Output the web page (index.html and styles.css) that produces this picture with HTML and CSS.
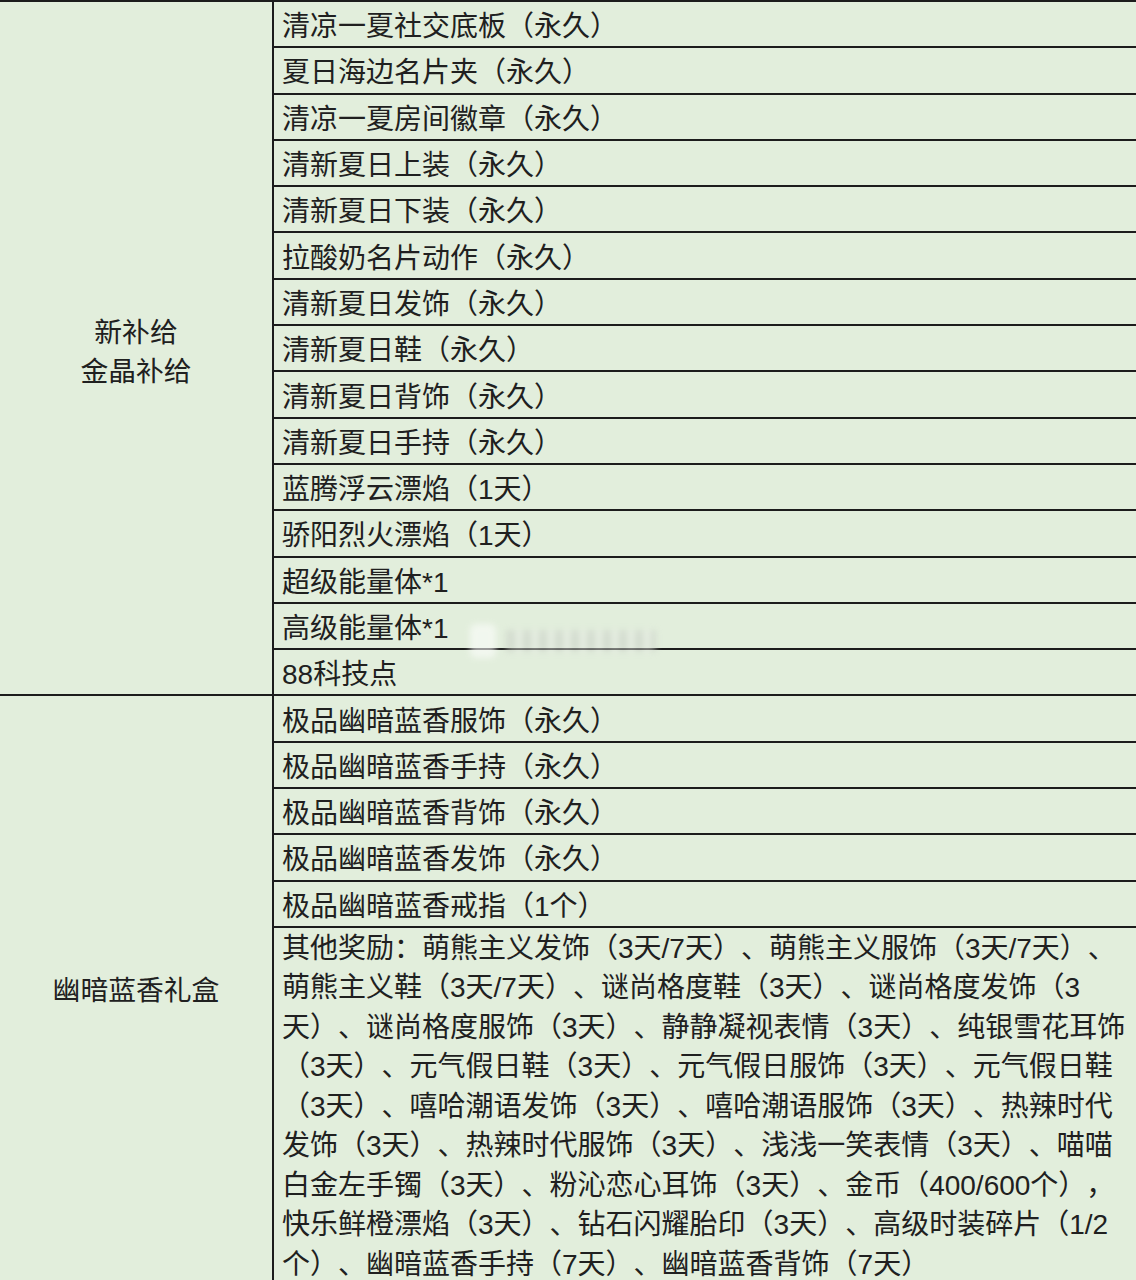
FILE: index.html
```html
<!DOCTYPE html>
<html lang="zh-CN">
<head>
<meta charset="utf-8">
<title>奖励表</title>
<link rel="stylesheet" href="styles.css">
</head>
<body>
<div class="sheet">
<table class="rewards">
  <colgroup><col class="c-name"><col class="c-item"></colgroup>
  <tbody>
    <tr><td class="group group-a" rowspan="15">新补给<br>金晶补给</td><td class="item">清凉一夏社交底板（永久）</td></tr>
    <tr><td class="item">夏日海边名片夹（永久）</td></tr>
    <tr><td class="item">清凉一夏房间徽章（永久）</td></tr>
    <tr><td class="item">清新夏日上装（永久）</td></tr>
    <tr><td class="item">清新夏日下装（永久）</td></tr>
    <tr><td class="item">拉酸奶名片动作（永久）</td></tr>
    <tr><td class="item">清新夏日发饰（永久）</td></tr>
    <tr><td class="item">清新夏日鞋（永久）</td></tr>
    <tr><td class="item">清新夏日背饰（永久）</td></tr>
    <tr><td class="item">清新夏日手持（永久）</td></tr>
    <tr><td class="item">蓝腾浮云漂焰（1天）</td></tr>
    <tr><td class="item">骄阳烈火漂焰（1天）</td></tr>
    <tr><td class="item">超级能量体*1</td></tr>
    <tr><td class="item">高级能量体*1</td></tr>
    <tr><td class="item">88科技点</td></tr>
    <tr><td class="group group-b" rowspan="6">幽暗蓝香礼盒</td><td class="item">极品幽暗蓝香服饰（永久）</td></tr>
    <tr><td class="item">极品幽暗蓝香手持（永久）</td></tr>
    <tr><td class="item">极品幽暗蓝香背饰（永久）</td></tr>
    <tr><td class="item">极品幽暗蓝香发饰（永久）</td></tr>
    <tr><td class="item">极品幽暗蓝香戒指（1个）</td></tr>
    <tr class="long-row"><td class="item long">
      <span class="ln">其他奖励：萌熊主义发饰（3天/7天）、萌熊主义服饰（3天/7天）、</span>
      <span class="ln">萌熊主义鞋（3天/7天）、谜尚格度鞋（3天）、谜尚格度发饰（3</span>
      <span class="ln">天）、谜尚格度服饰（3天）、静静凝视表情（3天）、纯银雪花耳饰</span>
      <span class="ln">（3天）、元气假日鞋（3天）、元气假日服饰（3天）、元气假日鞋</span>
      <span class="ln">（3天）、嘻哈潮语发饰（3天）、嘻哈潮语服饰（3天）、热辣时代</span>
      <span class="ln">发饰（3天）、热辣时代服饰（3天）、浅浅一笑表情（3天）、喵喵</span>
      <span class="ln">白金左手镯（3天）、粉沁恋心耳饰（3天）、金币（400/600个），</span>
      <span class="ln">快乐鲜橙漂焰（3天）、钻石闪耀胎印（3天）、高级时装碎片（1/2</span>
      <span class="ln">个）、幽暗蓝香手持（7天）、幽暗蓝香背饰（7天）</span>
    </td></tr>
  </tbody>
</table>
<div class="watermark"><span class="wm-icon"></span><span class="wm-text"></span></div>
</div>
</body>
</html>
```

FILE: styles.css
```css
html, body {
  margin: 0;
  padding: 0;
  background: #e2eedc;
}
.sheet {
  position: relative;
  width: 1136px;
  height: 1280px;
  overflow: hidden;
  background: #e2eedc;
}
.rewards {
  border-collapse: collapse;
  table-layout: fixed;
  width: 1140px;
  font-family: "Liberation Sans", "Noto Sans CJK SC", sans-serif;
  font-size: 28px;
  color: #202020;
  text-spacing-trim: space-all;
  font-feature-settings: "halt" 0, "chws" 0, "palt" 0;
}
.c-name { width: 273px; }
.rewards td {
  border: 2px solid #1c1c1c;
  padding: 0;
}
.rewards td.group {
  border-left: none;
  text-align: center;
  vertical-align: middle;
  line-height: 39px;
  font-size: 27.8px;
}
.rewards td.group-a { padding-top: 7px; }
.rewards td.group-b { padding-top: 0; }
.rewards td.item {
  height: 38.3px;
  padding: 6px 0 0 8px;
  line-height: 38px;
  white-space: nowrap;
  vertical-align: middle;
}
.rewards td.long {
  height: 352px;
  line-height: 39.5px;
  vertical-align: top;
  padding-top: 1px;
  padding-bottom: 0;
}
.ln { display: block; white-space: nowrap; }
.watermark {
  position: absolute;
  left: 470px;
  top: 624px;
  display: flex;
  align-items: center;
  gap: 10px;
  filter: blur(3px);
  opacity: 0.55;
}
.wm-icon {
  width: 26px;
  height: 34px;
  border-radius: 6px;
  background: #ffffff;
}
.wm-text {
  width: 150px;
  height: 22px;
  background: repeating-linear-gradient(90deg, #c9cfc6 0 10px, #eef3ec 10px 16px);
}
```
